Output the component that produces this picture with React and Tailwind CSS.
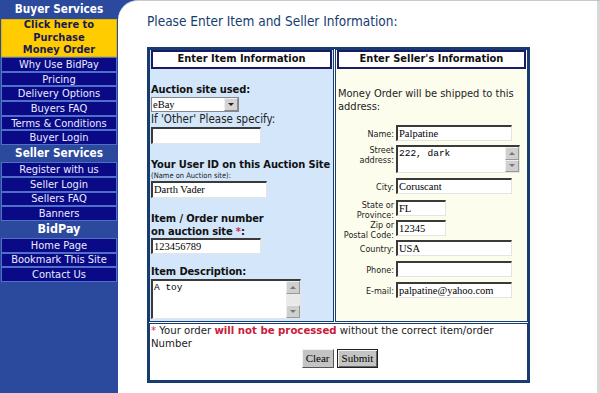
import React from "react";

const F = { fontFamily: "'DejaVu Sans Condensed', 'DejaVu Sans', sans-serif" };
const SERIF = { fontFamily: "'Liberation Serif', serif" };
const MONO = { fontFamily: "'Liberation Mono', monospace" };

function NavItem({ children }) {
  return (
    <div className="mx-[1px] h-[14.7px] bg-[#0a0a86] border border-[#4f6fc8] flex items-center justify-center text-[11px] leading-none text-[#e8ecff]">
      {children}
    </div>
  );
}

function NavHead({ children, h = "h-[17px]", size = "text-[11.7px]" }) {
  return (
    <div className={`${h} flex items-center justify-center font-bold text-white ${size} leading-none`}>
      {children}
    </div>
  );
}

function Input({ w, value, h = "h-[16px]" }) {
  return (
    <div
      className={`${w} ${h} bg-white border-t-2 border-l-2 border-t-[#3a3a3a] border-l-[#3a3a3a] border-r border-b border-r-[#e4e4e4] border-b-[#e4e4e4] text-[10.5px] leading-[13px] px-[1px] text-black overflow-hidden whitespace-nowrap`}
      style={SERIF}
    >
      {value}
    </div>
  );
}

function Scroll() {
  return (
    <div className="w-[14px] h-full bg-[#e9e9e9] flex flex-col justify-between">
      <div className="h-[13px] bg-[#cfcfcf] border border-[#eee] border-r-[#999] border-b-[#999] flex items-center justify-center">
        <div className="w-0 h-0 border-l-[3px] border-r-[3px] border-b-[3px] border-l-transparent border-r-transparent border-b-[#777]" />
      </div>
      <div className="h-[13px] bg-[#cfcfcf] border border-[#eee] border-r-[#999] border-b-[#999] flex items-center justify-center">
        <div className="w-0 h-0 border-l-[3px] border-r-[3px] border-t-[3px] border-l-transparent border-r-transparent border-t-[#777]" />
      </div>
    </div>
  );
}

function TextArea({ w, h, value }) {
  return (
    <div
      className={`${w} ${h} bg-white border-t-2 border-l-2 border-t-[#3a3a3a] border-l-[#3a3a3a] border-r border-b border-r-[#e4e4e4] border-b-[#e4e4e4] flex`}
    >
      <div className="flex-1 text-[9.5px] leading-[12px] px-[1px] pt-[1px] text-black" style={MONO}>
        {value}
      </div>
      <Scroll />
    </div>
  );
}

function Row({ label, children, two, mt }) {
  return (
    <div className={`flex items-start ${mt}`}>
      <div className={`w-[59px] h-[16px] pr-[2px] text-right text-[9px] leading-[10px] text-[#222] whitespace-nowrap ${two ? "pt-0" : "pt-[4px]"}`}>
        {label}
      </div>
      {children}
    </div>
  );
}

export default function App() {
  return (
    <div className="w-[600px] h-[393px] flex bg-[#2b4a9e] overflow-hidden" style={F}>
      <aside className="w-[118px] shrink-0 flex flex-col">
        <NavHead h="h-[19px]">Buyer Services</NavHead>
        <div className="mx-[1px] h-[38px] bg-[#ffcc00] border border-[#e0b800] flex flex-col items-center justify-center text-[11px] leading-[12.5px] font-bold text-[#1a1a50] text-center">
          <div>Click here to</div>
          <div>Purchase</div>
          <div>Money Order</div>
        </div>
        <NavItem>Why Use BidPay</NavItem>
        <NavItem>Pricing</NavItem>
        <NavItem>Delivery Options</NavItem>
        <NavItem>Buyers FAQ</NavItem>
        <NavItem>Terms &amp; Conditions</NavItem>
        <NavItem>Buyer Login</NavItem>
        <NavHead>Seller Services</NavHead>
        <NavItem>Register with us</NavItem>
        <NavItem>Seller Login</NavItem>
        <NavItem>Sellers FAQ</NavItem>
        <NavItem>Banners</NavItem>
        <NavHead h="h-[17px]" size="text-[12.5px]">BidPay</NavHead>
        <NavItem>Home Page</NavItem>
        <NavItem>Bookmark This Site</NavItem>
        <NavItem>Contact Us</NavItem>
      </aside>
      <main className="flex-1 bg-white rounded-tl-[20px] border-t border-r-[3px] border-t-[#c8c8d0] border-r-[#d8d8d8] pl-[29px] pt-[12px]">
        <h1 className="text-[13.5px] leading-[16px] text-[#163c70] font-normal">
          Please Enter Item and Seller Information:
        </h1>
        <div className="mt-[18px] w-[383px] h-[336px] border-2 border-[#163c70] flex flex-col bg-white">
          <div className="flex gap-[1px] h-[273px]">
            <div className="w-[185px] bg-[#d3e6fa] border border-[#163c70] px-[1px] flex flex-col">
              <div className="h-[19px] bg-white border-2 border-[#1a1a66] flex items-center justify-center font-bold text-[11px] text-[#111]">
                Enter Item Information
              </div>
              <div className="mt-[14px] font-bold text-[11px] leading-[13px] tracking-[-0.1px] text-[#111]">Auction site used:</div>
              <div className="mt-[1px] w-[88px] h-[15px] bg-white border border-[#888] flex text-[10.5px] leading-[13px] text-black" style={SERIF}>
                <div className="flex-1 px-[1px]">eBay</div>
                <div className="w-[14px] bg-[#d4d4d4] border border-[#f0f0f0] border-r-[#888] border-b-[#888] flex items-center justify-center">
                  <div className="w-0 h-0 border-l-[3px] border-r-[3px] border-t-[3px] border-l-transparent border-r-transparent border-t-[#222]" />
                </div>
              </div>
              <div className="mt-[1px] text-[11.5px] leading-[13px] text-[#222]">If 'Other' Please specify:</div>
              <div className="mt-[1px]"><Input w="w-[110px]" h="h-[17px]" value="" /></div>
              <div className="mt-[14px] font-bold text-[11px] leading-[13px] tracking-[-0.1px] text-[#111] whitespace-nowrap">Your User ID on this Auction Site</div>
              <div className="text-[7.5px] leading-[9px] text-[#222]">(Name on Auction site):</div>
              <div className="mt-[1px]"><Input w="w-[116px]" h="h-[17px]" value="Darth Vader" /></div>
              <div className="mt-[14px] font-bold text-[11px] leading-[13px] tracking-[-0.1px] text-[#111]">
                Item / Order number
                <br />
                on auction site <span className="text-[#d0305a]">*</span>:
              </div>
              <div className="mt-[0px]"><Input w="w-[110px]" h="h-[16px]" value="123456789" /></div>
              <div className="mt-[11px] font-bold text-[11px] leading-[13px] tracking-[-0.1px] text-[#111]">Item Description:</div>
              <div className="mt-[1px]"><TextArea w="w-[150px]" h="h-[40px]" value="A toy" /></div>
            </div>
            <div className="flex-1 bg-[#fdfdee] border border-[#163c70] px-[1px] flex flex-col">
              <div className="h-[19px] bg-white border-2 border-[#1a1a66] flex items-center justify-center font-bold text-[11px] text-[#111]">
                Enter Seller's Information
              </div>
              <div className="mt-[18px] text-[11px] leading-[13px] text-[#222] pl-[1px]">
                Money Order will be shipped to this
                <br />
                address:
              </div>
              <div className="mt-[12px] flex flex-col">
                <Row label="Name:"><Input w="w-[116px]" value="Palpatine" /></Row>
                <Row label={<>Street<br />address:</>} two mt="mt-[4px]">
                  <TextArea w="w-[124px]" h="h-[28px]" value="222, dark" />
                </Row>
                <Row label="City:" mt="mt-[5px]"><Input w="w-[116px]" value="Coruscant" /></Row>
                <Row label={<>State or<br />Province:</>} two mt="mt-[6px]"><Input w="w-[50px]" value="FL" /></Row>
                <Row label={<>Zip or<br />Postal Code:</>} two mt="mt-[4px]"><Input w="w-[50px]" value="12345" /></Row>
                <Row label="Country:" mt="mt-[4px]"><Input w="w-[116px]" value="USA" /></Row>
                <Row label="Phone:" mt="mt-[5px]"><Input w="w-[116px]" value="" /></Row>
                <Row label="E-mail:" mt="mt-[5px]"><Input w="w-[116px]" value="palpatine@yahoo.com" /></Row>
              </div>
            </div>
          </div>
          <div className="mt-[1px] flex-1 border border-[#163c70] bg-white px-[1px]">
            <div className="text-[11.3px] leading-[13px] text-[#222]">
              <span className="text-[#d0305a]">*</span> Your order{" "}
              <span className="font-bold text-[#c8203a]">will not be processed</span> without the correct item/order
              <br />
              Number
            </div>
            <div className="-mt-[1px] flex justify-center gap-[3px] pl-[3px]">
              <button className="h-[19px] px-[3px] bg-[#c4c4c4] border border-[#f2f2f2] border-r-[#555] border-b-[#555] text-[11px] leading-none text-black" style={SERIF}>Clear</button>
              <button className="h-[19px] px-[4px] bg-[#c4c4c4] border border-[#222] text-[11px] leading-none text-black shadow-[inset_1px_1px_0_#f2f2f2,inset_-1px_-1px_0_#666]" style={SERIF}>Submit</button>
            </div>
          </div>
        </div>
      </main>
    </div>
  );
}
